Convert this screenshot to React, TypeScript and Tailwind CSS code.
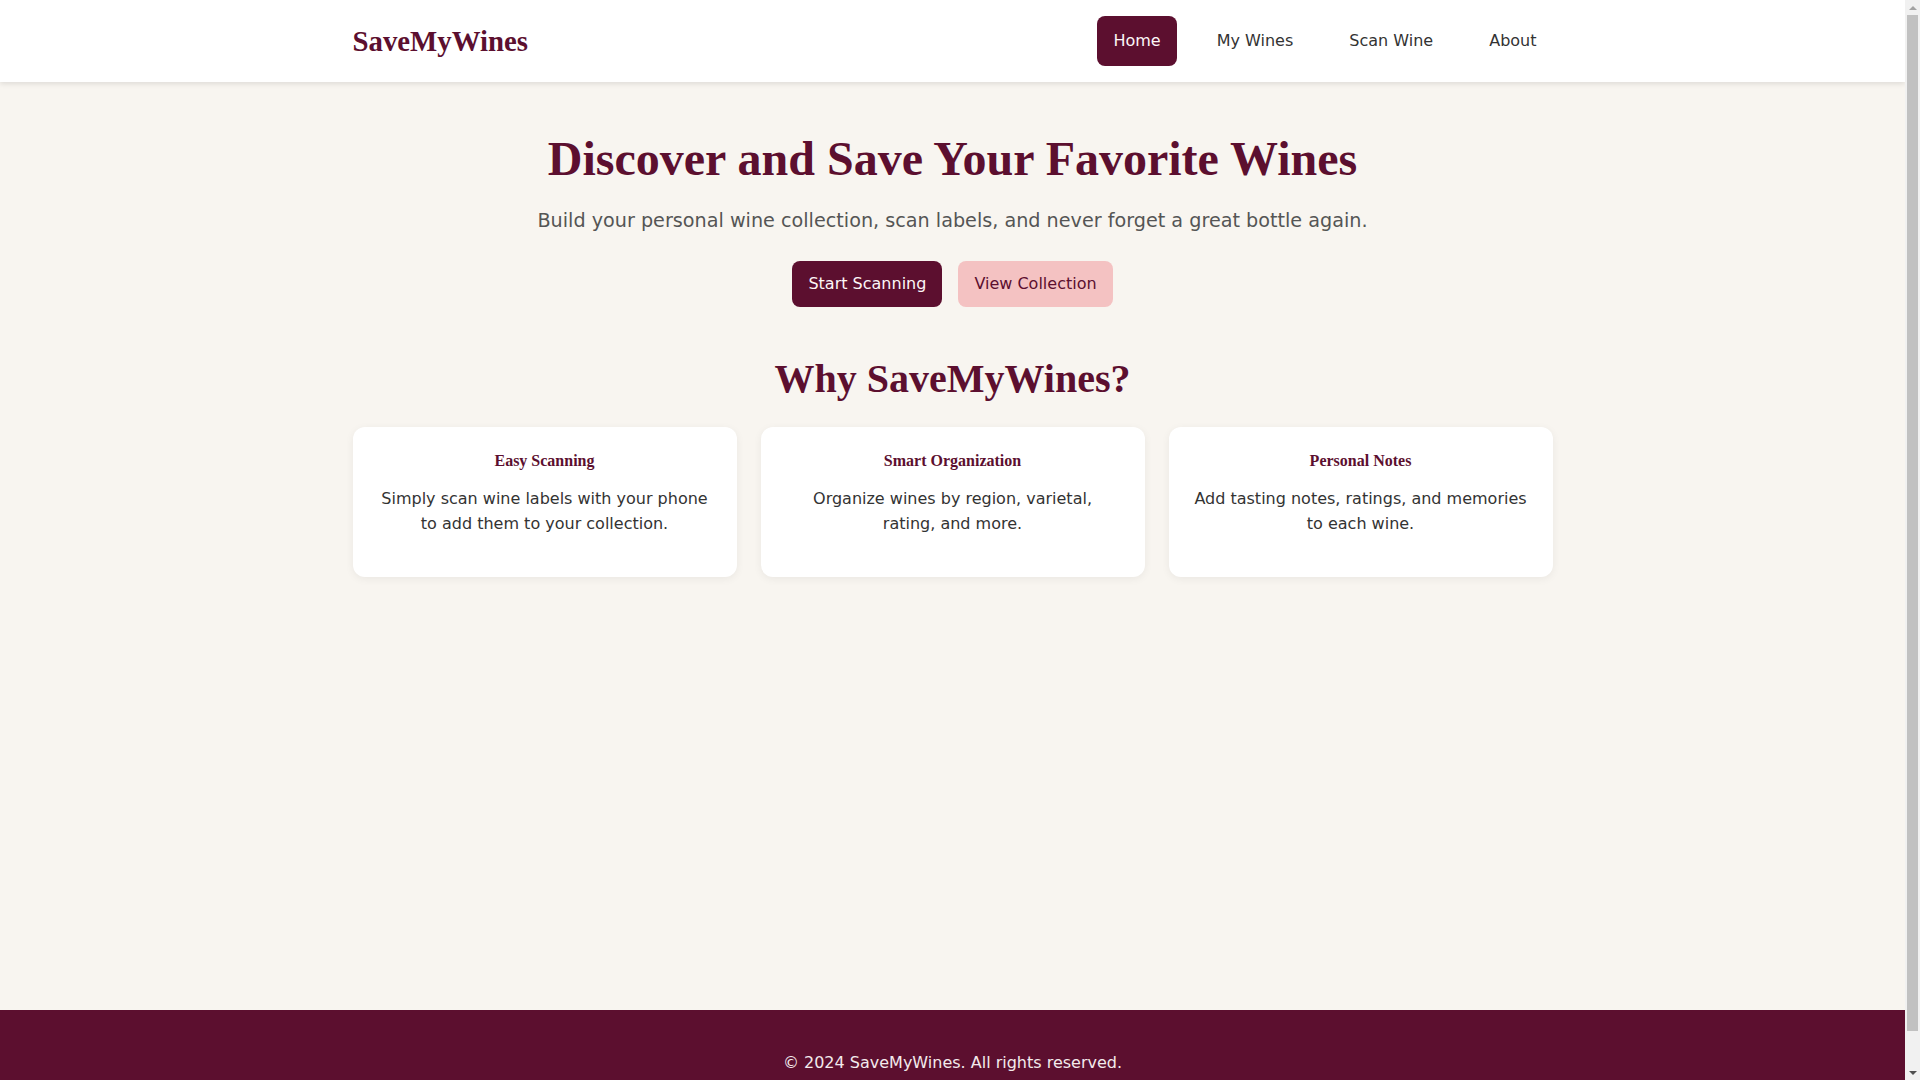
import React from "react"

const sans = "font-['DejaVu_Sans',sans-serif]"
const serif = "font-['Liberation_Serif',serif]"

const navItems = ["Home", "My Wines", "Scan Wine", "About"]

const features = [
    {
        title: "Easy Scanning",
        text: "Simply scan wine labels with your phone to add them to your collection.",
    },
    {
        title: "Smart Organization",
        text: "Organize wines by region, varietal, rating, and more.",
    },
    {
        title: "Personal Notes",
        text: "Add tasting notes, ratings, and memories to each wine.",
    },
]

const Header = () => (
    <header className="bg-white shadow-[0_2px_5px_rgba(0,0,0,0.1)] relative z-10">
        <div className="w-[1200px] mx-auto py-4 flex items-center justify-between">
            <div className={`${serif} text-[1.8rem] font-bold text-[#5c0f2f] leading-[1.6]`}>
                SaveMyWines
            </div>
            <nav className="flex items-center gap-6">
                {navItems.map((item, i) => (
                    <a
                        key={item}
                        className={
                            i === 0
                                ? "px-4 py-3 rounded-lg leading-[25.6px] bg-[#5c0f2f] text-[#fdf7f7]"
                                : "px-4 py-3 rounded-lg leading-[25.6px] text-[#333333]"
                        }
                    >
                        {item}
                    </a>
                ))}
            </nav>
        </div>
    </header>
)

const FeatureCard = ({ title, text }: { title: string, text: string }) => (
    <div className="bg-white rounded-xl shadow-[0_2px_8px_rgba(0,0,0,0.06)] pt-[22px] pb-[41px] px-6 text-center">
        <h3 className={`${serif} font-bold text-base leading-6 text-[#5c0f2f] mb-[13px]`}>
            {title}
        </h3>
        <p className="text-base leading-[25px] text-[#333333]">{text}</p>
    </div>
)

// the browser's scrollbar, as seen in the shot
const Scrollbar = () => (
    <div className="fixed top-0 right-0 h-screen w-[15px] bg-[#f1f1f1] flex flex-col items-center z-20">
        <div className="h-[15px] flex items-center justify-center">
            <div className="w-0 h-0 border-x-[4px] border-x-transparent border-b-[4px] border-b-[#a3a3a3]" />
        </div>
        <div className="w-[11px] h-[1016px] bg-[#c1c1c1]" />
        <div className="flex-1" />
        <div className="h-[15px] flex items-center justify-center">
            <div className="w-0 h-0 border-x-[4px] border-x-transparent border-t-[4px] border-t-[#505050]" />
        </div>
    </div>
)

export default function App() {
    return (
        <div className={`${sans} bg-[#f8f5f0] text-base leading-[1.6] mr-[15px]`}>
            <Header />
            <main className="min-h-[928px] pt-12">
                <div className="w-[1200px] mx-auto">
                    <section className="text-center">
                        <h1 className={`${serif} text-5xl font-bold leading-[1.2] text-[#5c0f2f] mb-[19px]`}>
                            Discover and Save Your Favorite Wines
                        </h1>
                        <p className="text-[1.2rem] leading-[1.6] text-[#555555]">
                            Build your personal wine collection, scan labels, and never forget a great bottle again.
                        </p>
                        <div className="flex justify-center gap-4 mt-[24px]">
                            <button className="px-4 py-2.5 rounded-lg leading-[25.6px] bg-[#5c0f2f] text-[#fdf7f7]">
                                Start Scanning
                            </button>
                            <button className="px-4 py-2.5 rounded-lg leading-[25.6px] bg-[#f4c2c2] text-[#5c0f2f]">
                                View Collection
                            </button>
                        </div>
                    </section>

                    <section className="mt-12">
                        <h2 className={`${serif} text-[2.5rem] font-bold leading-[1.2] text-center text-[#5c0f2f] mb-6`}>
                            Why SaveMyWines?
                        </h2>
                        <div className="grid grid-cols-3 gap-6">
                            {features.map((f) => (
                                <FeatureCard key={f.title} title={f.title} text={f.text} />
                            ))}
                        </div>
                    </section>
                </div>
            </main>
            <footer className="bg-[#5c0f2f] text-[#f3eaec] text-center py-10">
                <p className="leading-[25.6px]">© 2024 SaveMyWines. All rights reserved.</p>
            </footer>
            <Scrollbar />
        </div>
    )
}
